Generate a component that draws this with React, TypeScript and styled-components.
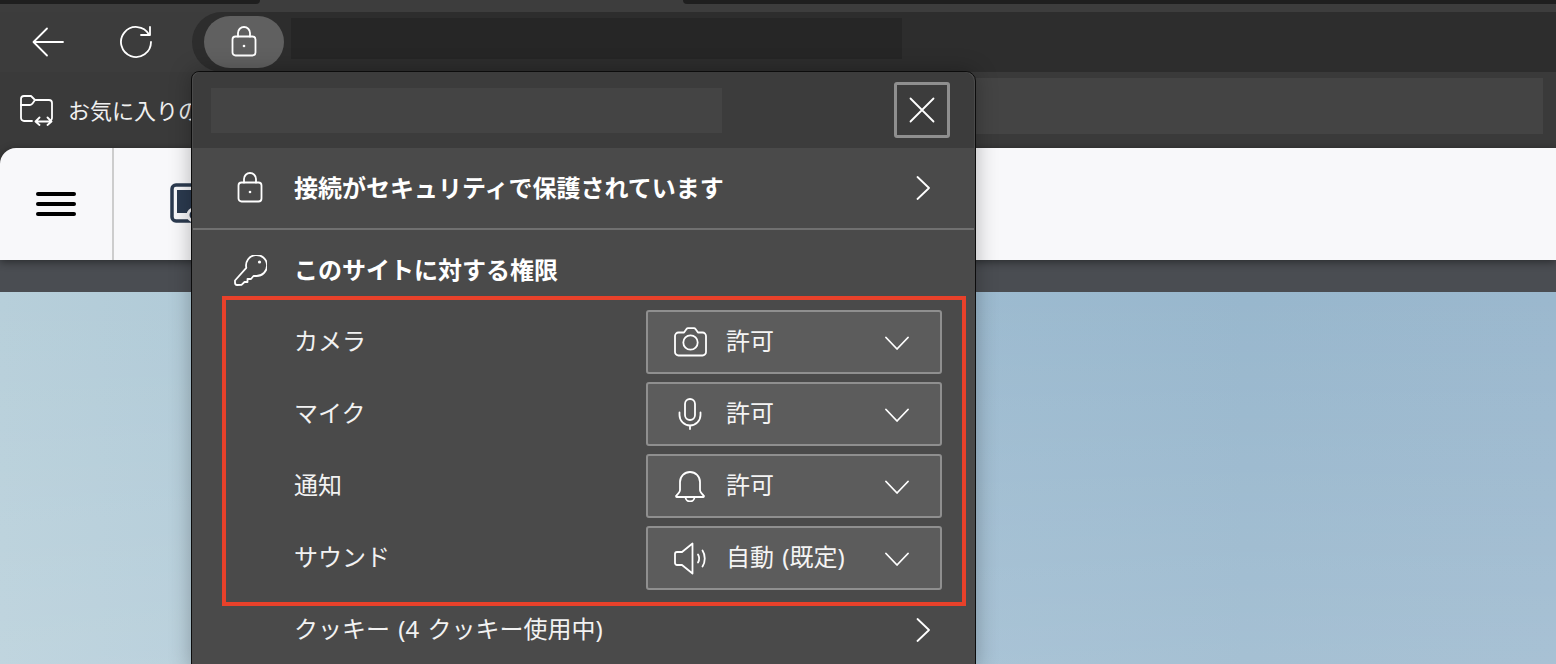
import React from "react";
import styled, { createGlobalStyle } from "styled-components";

const Global = createGlobalStyle`
  html, body { margin: 0; padding: 0; background: #3a3a3a; }
  body { font-family: "Noto Sans", "Noto Sans CJK JP", sans-serif; overflow: hidden; }
  * { box-sizing: border-box; }
`;

const Page = styled.div`
  position: relative;
  width: 1556px;
  height: 664px;
  overflow: hidden;
  display: flex;
  flex-direction: column;
  background: #3a3a3a;
`;

const TabStrip = styled.div`
  height: 12px;
  flex: none;
  display: flex;
  justify-content: space-between;
  align-items: flex-start;
  background: #3d3d3d;
`;
const DarkTab = styled.div<{ $w: number; $left?: boolean }>`
  width: ${(p) => p.$w}px;
  height: 4px;
  background: #1f1f1f;
  border-radius: ${(p) => (p.$left ? "0 0 0 6px" : "0 0 6px 0")};
`;

const Toolbar = styled.div`
  height: 60px;
  flex: none;
  display: flex;
  background: #3c3c3c;
`;
const NavGroup = styled.div`
  width: 192px;
  flex: none;
  display: flex;
  align-items: center;
  padding: 0 0 0 32px;
  gap: 56px;
`;
const AddressBar = styled.div`
  flex: 1;
  display: flex;
  gap: 7px;
  padding: 4px 0 0 12px;
  background: #2d2d2d;
  border-radius: 30px 0 0 30px;
`;
const LockPill = styled.div`
  width: 80px;
  height: 52px;
  border-radius: 26px;
  background: #606060;
  display: flex;
  align-items: center;
  justify-content: center;
`;
const UrlMask = styled.div`
  width: 611px;
  height: 41px;
  margin-top: 2px;
  background: #262626;
`;

const BookmarkBar = styled.div`
  height: 76px;
  flex: none;
  display: flex;
  align-items: center;
  padding: 0 13px 0 20px;
  background: #3a3a3a;
`;
const FavoritesLabel = styled.span`
  margin: -1px 0 0 15px;
  font-size: 22px;
  line-height: 30px;
  color: #f0f0f0;
  white-space: nowrap;
`;
const BookmarkMask = styled.div`
  margin-left: auto;
  align-self: flex-start;
  margin-top: 6px;
  width: 700px;
  height: 56px;
  background: #444444;
`;

const AppBar = styled.div`
  position: relative;
  z-index: 1;
  height: 112px;
  flex: none;
  display: flex;
  align-items: center;
  background: #f8f8fa;
  border-radius: 16px 0 0 0;
  box-shadow: 0 2px 8px rgba(0, 0, 0, 0.45);
`;
const MenuCell = styled.div`
  width: 114px;
  height: 100%;
  flex: none;
  display: flex;
  flex-direction: column;
  gap: 5.5px;
  align-items: flex-start;
  justify-content: center;
  padding-left: 36px;
  border-right: 2px solid #cdcdcd;
`;
const MenuBar = styled.span`
  width: 40px;
  height: 4.5px;
  border-radius: 3px;
  background: #000;
`;
const AppIconSlot = styled.div`
  margin-left: 56px;
  display: flex;
`;

const Subbar = styled.div`
  height: 32px;
  flex: none;
  background: #4a4d52;
`;
const Wallpaper = styled.div`
  flex: 1;
  background:
    linear-gradient(180deg, rgba(255, 255, 255, 0) 0%, rgba(255, 255, 255, 0.13) 100%),
    linear-gradient(90deg, #b7cfda 0%, #a9c5d5 30%, #9dbbd0 62%, #98b7cd 80%, #9bb8ce 100%);
`;

const Popover = styled.div`
  position: absolute;
  z-index: 2;
  left: 191px;
  top: 71px;
  width: 785px;
  height: 600px;
  padding: 0 1px;
  background: #4a4a4a;
  border: 1px solid #0c0c0c;
  border-radius: 8px 10px 0 0;
  box-shadow: 0 0 22px rgba(0, 0, 0, 0.28);
  color: #fff;
  display: flex;
  flex-direction: column;
`;
const PopHeader = styled.div`
  height: 76px;
  flex: none;
  display: flex;
  align-items: center;
  justify-content: space-between;
  padding: 0 24px 0 18px;
  background: #3c3c3c;
  border-radius: 8px 10px 0 0;
`;
const TitleMask = styled.div`
  width: 511px;
  height: 45px;
  background: #444444;
`;
const CloseButton = styled.button`
  width: 56px;
  height: 56px;
  padding: 0;
  display: flex;
  align-items: center;
  justify-content: center;
  background: transparent;
  border: 3px solid #8f8f8f;
  border-radius: 3px;
`;
const InfoRow = styled.div<{ $h: number; $pt?: number }>`
  height: ${(p) => p.$h}px;
  flex: none;
  display: flex;
  align-items: center;
  padding: ${(p) => p.$pt ?? 0}px 44px 0 41px;
`;
const RowIcon = styled.div`
  width: 32px;
  margin-right: 28px;
  display: flex;
  justify-content: center;
`;
const BoldText = styled.span`
  flex: 1;
  margin-top: -1px;
  font-size: 24px;
  line-height: 32px;
  font-weight: 700;
  color: #fff;
`;
const Divider = styled.div`
  height: 2px;
  flex: none;
  background: #707070;
`;
const PermissionBox = styled.div`
  flex: none;
  margin: 0 8px 0 29px;
  height: 310px;
  padding: 10px 20px 12px 68px;
  border: 4px solid #e8412a;
  display: flex;
  flex-direction: column;
  gap: 8px;
`;
const PermissionRow = styled.div`
  height: 64px;
  display: flex;
  align-items: center;
  justify-content: space-between;
`;
const PermissionLabel = styled.span`
  font-size: 24px;
  line-height: 32px;
  margin-top: -2px;
  color: #f2f2f2;
`;
const Select = styled.div`
  width: 296px;
  height: 64px;
  display: flex;
  align-items: center;
  padding: 0 31px 0 26px;
  background: #5c5c5c;
  border: 2px solid #8f8f8f;
  border-radius: 3px;
`;
const SelectIcon = styled.div`
  width: 32px;
  flex: none;
  margin-right: 20px;
  display: flex;
  justify-content: center;
`;
const SelectValue = styled.span`
  flex: 1;
  margin-top: -2px;
  font-size: 24px;
  line-height: 30px;
  word-spacing: 2px;
  color: #f4f4f4;
  white-space: nowrap;
`;
const ChevronSlot = styled.div`
  margin-top: 3px;
  display: flex;
`;
const CookieText = styled.span`
  flex: 1;
  margin: -2px 0 0 60px;
  font-size: 24px;
  line-height: 32px;
  word-spacing: 2px;
  color: #f2f2f2;
`;

const Glyph = styled.svg`
  display: block;
  flex: none;
  fill: none;
  stroke: #fff;
  stroke-width: 1.8;
  stroke-linecap: round;
  stroke-linejoin: round;
`;

const LockIcon = () => (
  <Glyph width="26" height="32" viewBox="0 0 26 32">
    <rect x="1.500" y="10.500" width="23" height="19" rx="3" />
    <path d="M7 10.500V7a6 6 0 0 1 12 0v3.500" />
    <circle cx="13" cy="20" r="1.300" fill="#fff" stroke="none" />
  </Glyph>
);
const BackIcon = () => (
  <Glyph width="32" height="30" viewBox="0 0 32 30">
    <path d="M31 15H2M15 1.500 1.500 15 15 28.500" />
  </Glyph>
);
const RefreshIcon = () => (
  <Glyph width="34" height="32" viewBox="0 0 34 32">
    <path d="M29 8.500A15 15 0 1 0 31 16" />
    <path d="M30 1V9H21" />
  </Glyph>
);
const FavoritesIcon = () => (
  <Glyph width="33" height="31" viewBox="0 0 33 31">
    <path d="M12 26H4a3 3 0 0 1-3-3V4a3 3 0 0 1 3-3h7l4 4h14a3 3 0 0 1 3 3v15a3 3 0 0 1-1 2.200" />
    <path d="M1 10h9a3 3 0 0 0 2.500-1.400L15 5" />
    <path d="M16 26.500h15M19.500 22.500 15.500 26.500 19.500 30M27.500 22.500 31.500 26.500 27.500 30" />
  </Glyph>
);
const CloseIcon = () => (
  <Glyph width="26" height="26" viewBox="0 0 26 26">
    <path d="M1.500 1.500 24.500 24.500M24.500 1.500 1.500 24.500" />
  </Glyph>
);
const ChevronRight = () => (
  <Glyph width="15" height="24" viewBox="0 0 15 24">
    <path d="M2.500 1 14 12 2.500 23" />
  </Glyph>
);
const ChevronDown = () => (
  <Glyph width="25" height="15" viewBox="0 0 25 15">
    <path d="M2 1.500 13 13 24 1.500" />
  </Glyph>
);
const KeyIcon = () => (
  <Glyph width="33" height="31" viewBox="0 0 33 31">
    <path d="M12.300 12.800A10.500 10.500 0 1 1 22 21H19.500L17 24H13.500V27H10.500L7.500 29.800L3 30Q1 30 1 27.500V25.500Z" />
    <circle cx="25.500" cy="7" r="1.600" fill="#fff" stroke="none" />
  </Glyph>
);
const CameraIcon = () => (
  <Glyph width="33" height="30" viewBox="0 0 33 30">
    <path d="M4.500 5.500H10L12.500 2a2 2 0 0 1 1.500-.8h6a2 2 0 0 1 1.500.8L24 5.500h4.500A3.500 3.500 0 0 1 32 9v16a3.500 3.500 0 0 1-3.500 3.500H4.500A3.500 3.500 0 0 1 1 25V9A3.500 3.500 0 0 1 4.500 5.500Z" />
    <circle cx="16.500" cy="15.500" r="7.200" />
  </Glyph>
);
const MicIcon = () => (
  <Glyph width="24" height="32" viewBox="0 0 24 32">
    <rect x="7" y="1" width="10" height="21" rx="5" />
    <path d="M1.500 14.500v2.500a10.500 10.500 0 0 0 21 0v-2.500M12 27.500V31" />
  </Glyph>
);
const BellIcon = () => (
  <Glyph width="30" height="32" viewBox="0 0 30 32">
    <path d="M5 12a10 10 0 0 1 20 0v8c0 2 1 3 3.500 5.500a.8.800 0 0 1-.5 1.500H2a.8.800 0 0 1-.5-1.500C4 23 5 22 5 20Z" />
    <path d="M10.500 27a4.500 4.500 0 0 0 9 0" />
  </Glyph>
);
const SoundIcon = () => (
  <Glyph width="33" height="33" viewBox="0 0 33 33">
    <path d="M1 12a2 2 0 0 1 2-2h5L18.500 1.500V31.500L8 23H3a2 2 0 0 1-2-2Z" />
    <path d="M24 12.500c1.500 2.500 1.500 5.500 0 8M28.500 8.500c3 4.500 3 11.500 0 16" />
  </Glyph>
);
const AppIcon = () => (
  <svg width="38" height="42" viewBox="0 0 38 42" style={{ display: "block", flex: "none" }}>
    <rect x="2" y="2" width="34" height="36" rx="4" fill="none" stroke="#2b3a4f" strokeWidth="3.500" />
    <rect x="7" y="7" width="24" height="23" fill="#2b3a4f" />
    <circle cx="24" cy="32" r="6" fill="#2b3a4f" stroke="#f8f8fa" strokeWidth="3" />
  </svg>
);

const permissions = [
  { label: "カメラ", value: "許可", icon: <CameraIcon /> },
  { label: "マイク", value: "許可", icon: <MicIcon /> },
  { label: "通知", value: "許可", icon: <BellIcon /> },
  { label: "サウンド", value: "自動 (既定)", icon: <SoundIcon /> },
];

export default function App() {
  return (
    <Page>
      <Global />
      <TabStrip>
        <DarkTab $w={260} />
        <DarkTab $w={873} $left />
      </TabStrip>
      <Toolbar>
        <NavGroup>
          <BackIcon />
          <RefreshIcon />
        </NavGroup>
        <AddressBar>
          <LockPill>
            <LockIcon />
          </LockPill>
          <UrlMask />
        </AddressBar>
      </Toolbar>
      <BookmarkBar>
        <FavoritesIcon />
        <FavoritesLabel>お気に入りのインポート</FavoritesLabel>
        <BookmarkMask />
      </BookmarkBar>
      <AppBar>
        <MenuCell>
          <MenuBar />
          <MenuBar />
          <MenuBar />
        </MenuCell>
        <AppIconSlot>
          <AppIcon />
        </AppIconSlot>
      </AppBar>
      <Subbar />
      <Wallpaper />
      <Popover>
        <PopHeader>
          <TitleMask />
          <CloseButton aria-label="閉じる">
            <CloseIcon />
          </CloseButton>
        </PopHeader>
        <InfoRow $h={80}>
          <RowIcon>
            <LockIcon />
          </RowIcon>
          <BoldText>接続がセキュリティで保護されています</BoldText>
          <ChevronRight />
        </InfoRow>
        <Divider />
        <InfoRow $h={66} $pt={14}>
          <RowIcon>
            <KeyIcon />
          </RowIcon>
          <BoldText>このサイトに対する権限</BoldText>
        </InfoRow>
        <PermissionBox>
          {permissions.map((item) => (
            <PermissionRow key={item.label}>
              <PermissionLabel>{item.label}</PermissionLabel>
              <Select>
                <SelectIcon>{item.icon}</SelectIcon>
                <SelectValue>{item.value}</SelectValue>
                <ChevronSlot>
                  <ChevronDown />
                </ChevronSlot>
              </Select>
            </PermissionRow>
          ))}
        </PermissionBox>
        <InfoRow $h={48}>
          <CookieText>クッキー (4 クッキー使用中)</CookieText>
          <ChevronRight />
        </InfoRow>
      </Popover>
    </Page>
  );
}
